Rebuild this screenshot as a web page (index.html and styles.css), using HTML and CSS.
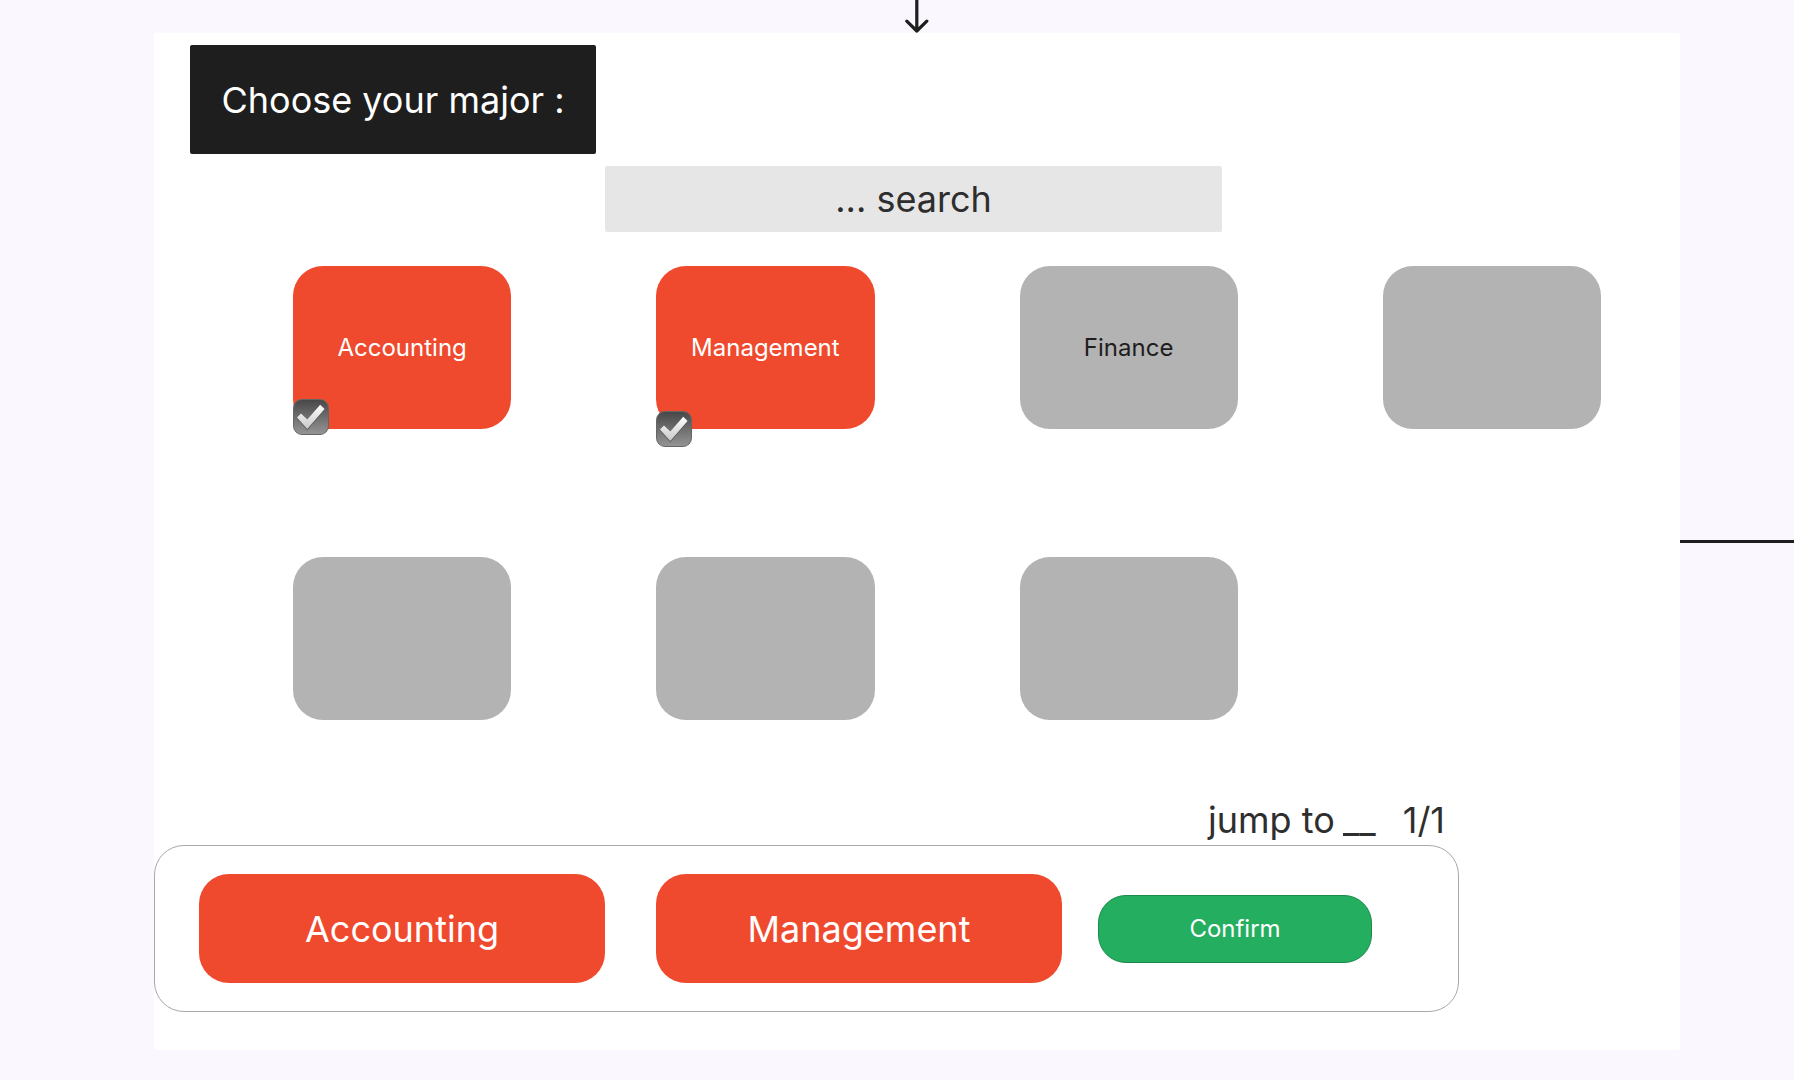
FILE: index.html
```html
<!DOCTYPE html>
<html lang="en">
<head>
  <meta charset="utf-8">
  <meta name="viewport" content="width=device-width, initial-scale=1">
  <title>Choose your major</title>
  <link rel="stylesheet" href="styles.css">
</head>
<body>
  <div class="board">
    <svg class="arrow" width="26" height="33" viewBox="0 0 26 33" aria-hidden="true">
      <path d="M12.8 -2V31M2.8 21.2L12.8 31L22.8 21.2" fill="none" stroke="#1e1e1e" stroke-width="3.2" stroke-linecap="round" stroke-linejoin="round"/>
    </svg>

    <main class="panel">
      <h1 class="title">Choose your major :</h1>
      <input class="search" type="text" role="searchbox" aria-label="Search majors" placeholder="... search">

      <div class="majors">
        <label class="major major-selected">
          Accounting
          <input class="tick" type="checkbox" checked>
          <svg class="tick-mark" viewBox="0 0 36 36" aria-hidden="true"><use href="#check"/></svg>
        </label>
        <label class="major major-selected major-low">
          Management
          <input class="tick" type="checkbox" checked>
          <svg class="tick-mark" viewBox="0 0 36 36" aria-hidden="true"><use href="#check"/></svg>
        </label>
        <button class="major" type="button">Finance</button>
        <button class="major" type="button" aria-label="Empty major"></button>
        <button class="major" type="button" aria-label="Empty major"></button>
        <button class="major" type="button" aria-label="Empty major"></button>
        <button class="major" type="button" aria-label="Empty major"></button>
      </div>

      <div class="pager">
        <label for="page">jump to</label>
        <input class="page-input" id="page" type="text" value="__">
        <span class="page-count">1/1</span>
      </div>

      <div class="tray">
        <button class="chip" type="button">Accounting</button>
        <button class="chip" type="button">Management</button>
        <button class="confirm" type="button">Confirm</button>
      </div>
    </main>

    <div class="connector"></div>
  </div>

  <svg class="defs" width="0" height="0" aria-hidden="true">
    <defs>
      <linearGradient id="check-fill" x1="0" y1="0" x2="0" y2="1">
        <stop offset="0" stop-color="#ffffff"/>
        <stop offset="1" stop-color="#c8c8c8"/>
      </linearGradient>
      <symbol id="check" viewBox="0 0 36 36">
        <path d="M4 19.2L8 15L14.3 21.2L27.3 6.4L31.7 10.8L14.3 31.4Z" fill="#444" opacity=".6"/>
        <path d="M4 18.4L8 14.4L14.3 20.6L27.2 5.8L31.6 10L14.3 30Z" fill="url(#check-fill)"/>
      </symbol>
    </defs>
  </svg>
</body>
</html>
```
FILE: styles.css
```css
* {
  box-sizing: border-box;
}

body {
  margin: 0;
  background: #faf7ff;
  color: #2e2e2e;
  font-family: Inter, "Liberation Sans", sans-serif;
}

button,
input {
  margin: 0;
  padding: 0;
  border: 0;
  color: inherit;
  font: inherit;
}

button,
label {
  cursor: pointer;
}

.defs {
  position: absolute;
}

.board {
  display: grid;
  grid-template-columns: 154px 1fr 114px;
  grid-template-rows: 33px auto;
  min-height: 100vh;
  padding-bottom: 30px;
}

.arrow {
  grid-column: 2;
  justify-self: center;
}

.panel {
  grid-column: 2;
  padding: 12px 0 37px;
  border-radius: 2px;
  background: #fff;
}

.connector {
  grid-column: 3;
  align-self: center;
  height: 3px;
  background: #1e1e1e;
}

.title {
  display: flex;
  align-items: center;
  justify-content: center;
  width: 406px;
  height: 109px;
  margin: 0 0 12px 36px;
  border-radius: 2px;
  background: #1e1e1e;
  color: #fff;
  font-size: 36px;
  font-weight: 400;
}

.search {
  display: block;
  width: calc(100% - 909px);
  min-width: 320px;
  height: 66px;
  margin-left: 451px;
  border-radius: 2px;
  background: #e6e6e6;
  font-size: 36px;
  text-align: center;
}

.search::placeholder {
  color: inherit;
  opacity: 1;
}

.majors {
  display: grid;
  grid-template-columns: repeat(4, 1fr);
  gap: 128px 145px;
  padding: 34px 79px 0 139px;
}

.major {
  position: relative;
  display: flex;
  align-items: center;
  justify-content: center;
  height: 163px;
  border-radius: 30px;
  background: #b3b3b3;
  color: #1e1e1e;
  font-size: 24px;
}

.major-selected {
  background: #f04a2e;
  color: #fff;
}

.tick,
.tick-mark {
  position: absolute;
  left: 0;
  bottom: -6px;
  width: 36px;
  height: 36px;
}

.major-low .tick,
.major-low .tick-mark {
  bottom: -18px;
}

.tick {
  border: 1px solid #666;
  border-radius: 9px;
  background: linear-gradient(#484848, #949494);
  appearance: none;
}

.tick-mark {
  pointer-events: none;
}

.tick:not(:checked) + .tick-mark {
  display: none;
}

.pager {
  display: flex;
  align-items: center;
  justify-content: flex-end;
  margin: 78px 235px 3px 0;
  font-size: 36px;
  line-height: 44px;
}

.page-input {
  width: 36px;
  height: 44px;
  margin: 0 24px 0 8px;
  background: transparent;
}

.tray {
  display: flex;
  align-items: center;
  height: 167px;
  margin-right: 221px;
  padding-left: 44px;
  border: 1px solid #a8a8a8;
  border-radius: 30px;
}

.chip {
  width: 406px;
  height: 109px;
  border-radius: 30px;
  background: #f04a2e;
  color: #fff;
  font-size: 36px;
}

.chip + .chip {
  margin-left: 51px;
}

.confirm {
  width: 274px;
  height: 68px;
  margin-left: 36px;
  border: 1px solid #1b8a4b;
  border-radius: 28px;
  background: #24ae5f;
  color: #fff;
  font-size: 24px;
}
```
